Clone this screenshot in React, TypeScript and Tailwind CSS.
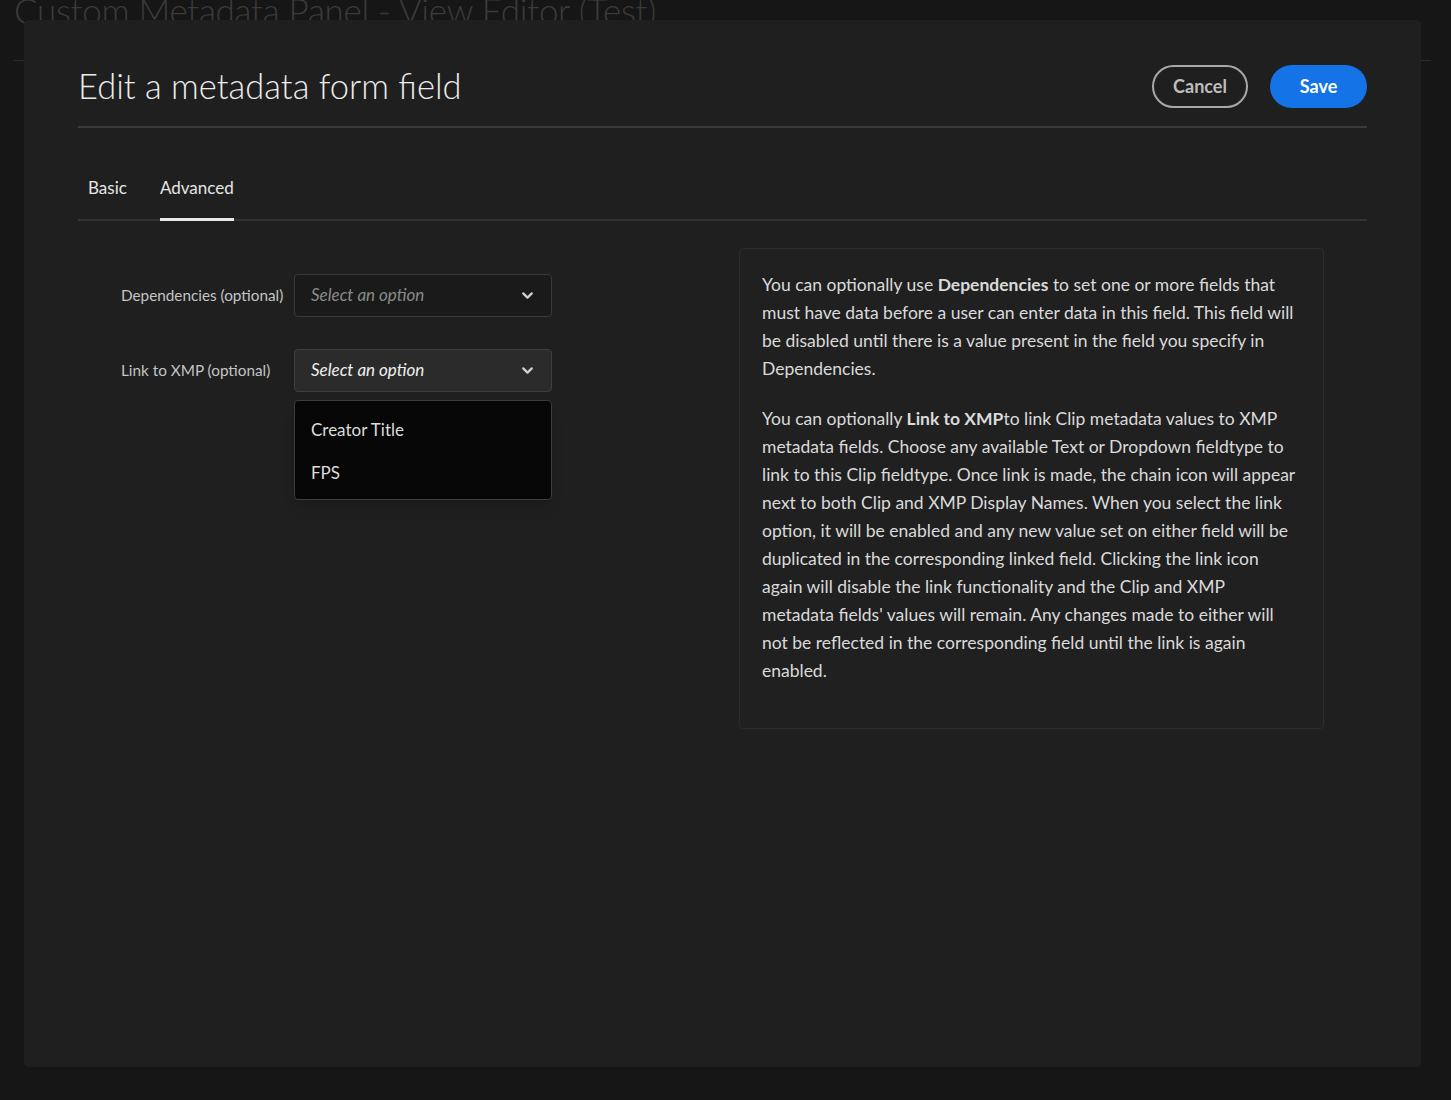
import { ChevronDown } from 'lucide-react';

const font = { fontFamily: 'Lato, "Open Sans", sans-serif' };

function SelectBox({ label, open }: { label: string; open?: boolean }) {
  return (
    <div className="flex items-start">
      <div className="w-[173px] pt-[10px] text-[15.3px] text-[#c4c4c4]">{label}</div>
      <div className="relative w-[258px]">
        <div
          className={
            open
              ? 'flex h-[43px] items-center justify-between rounded-[4px] border border-[#3e3e3e] bg-[#2b2b2b] pl-[16px] pr-[15px]'
              : 'flex h-[43px] items-center justify-between rounded-[4px] border border-[#383838] bg-[#1a1a1a] pl-[16px] pr-[15px]'
          }
        >
          <span className={open ? 'text-[17px] italic text-[#f0f0f0]' : 'text-[17px] italic text-[#8a8a8a]'}>
            Select an option
          </span>
          <ChevronDown className="h-[17px] w-[17px] text-[#d0d0d0]" strokeWidth={3.2} />
        </div>
        {open && (
          <div className="absolute left-0 top-[51px] w-full rounded-[4px] border border-[#3c3c3c] bg-[#060606] pb-[4px] pt-[8px] shadow-lg">
            <div className="flex h-[43px] items-center px-[16px] text-[17px] text-[#dcdcdc]">Creator Title</div>
            <div className="flex h-[43px] items-center px-[16px] text-[17px] text-[#dcdcdc]">FPS</div>
          </div>
        )}
      </div>
    </div>
  );
}

export default function App() {
  return (
    <div className="relative h-[1100px] w-full overflow-hidden bg-[#161616]" style={font}>
      {/* page behind the modal */}
      <div className="mt-[-12px] pl-[14px] text-[35px] font-light leading-[44px] tracking-[-0.3px] text-[#3b3b3b]">
        Custom Metadata Panel - View Editor (Test)
      </div>
      <div className="ml-[14px] mt-[28px] h-[1px] w-[1417px] bg-[#2c2c2c]" />

      {/* modal */}
      <div className="absolute left-[24px] top-[20px] flex h-[1047px] w-[1397px] flex-col rounded-[5px] bg-[#1f1f1f] px-[54px] pt-[44px]">
        <div className="flex items-center justify-between border-b-2 border-[#3a3a3a] pb-[18px]">
          <h1 className="text-[34.5px] font-light leading-[44px] text-[#ececec]">Edit a metadata form field</h1>
          <div className="flex items-center gap-[22px]">
            <button className="h-[43px] w-[96px] rounded-full border-2 border-[#a8a8a8] text-[18px] font-bold text-[#bdbdbd]">
              Cancel
            </button>
            <button className="h-[43px] w-[97px] rounded-full bg-[#1473e6] text-[18px] font-bold text-white">
              Save
            </button>
          </div>
        </div>

        <div className="mt-[47px] flex gap-[33px] border-b-2 border-[#333333] pl-[10px]">
          <div className="pb-[18px] text-[17px] text-[#e6e6e6]">Basic</div>
          <div className="-mb-[2px] border-b-[3px] border-[#e8e8e8] pb-[17px] text-[17px] text-[#e6e6e6]">Advanced</div>
        </div>

        <div className="mt-[27px] flex justify-between px-[43px]">
          <div className="flex flex-col gap-[32px] pt-[26px]">
            <SelectBox label="Dependencies (optional)" />
            <SelectBox label="Link to XMP (optional)" open />
          </div>

          <div className="w-[585px] whitespace-nowrap rounded-[4px] border border-[#2c2c2c] bg-[#202020] px-[22px] pb-[43px] pt-[22px] text-[17.5px] leading-[28px] text-[#dadada]">
            <p>
              You can optionally use <b className="font-bold">Dependencies</b> to set one or more fields that
              <br />
              must have data before a user can enter data in this field. This field will
              <br />
              be disabled until there is a value present in the field you specify in
              <br />
              Dependencies.
            </p>
            <p className="mt-[22px]">
              You can optionally <b className="font-bold">Link to XMP</b>to link Clip metadata values to XMP
              <br />
              metadata fields. Choose any available Text or Dropdown fieldtype to
              <br />
              link to this Clip fieldtype. Once link is made, the chain icon will appear
              <br />
              next to both Clip and XMP Display Names. When you select the link
              <br />
              option, it will be enabled and any new value set on either field will be
              <br />
              duplicated in the corresponding linked field. Clicking the link icon
              <br />
              again will disable the link functionality and the Clip and XMP
              <br />
              metadata fields' values will remain. Any changes made to either will
              <br />
              not be reflected in the corresponding field until the link is again
              <br />
              enabled.
            </p>
          </div>
        </div>
      </div>
    </div>
  );
}
